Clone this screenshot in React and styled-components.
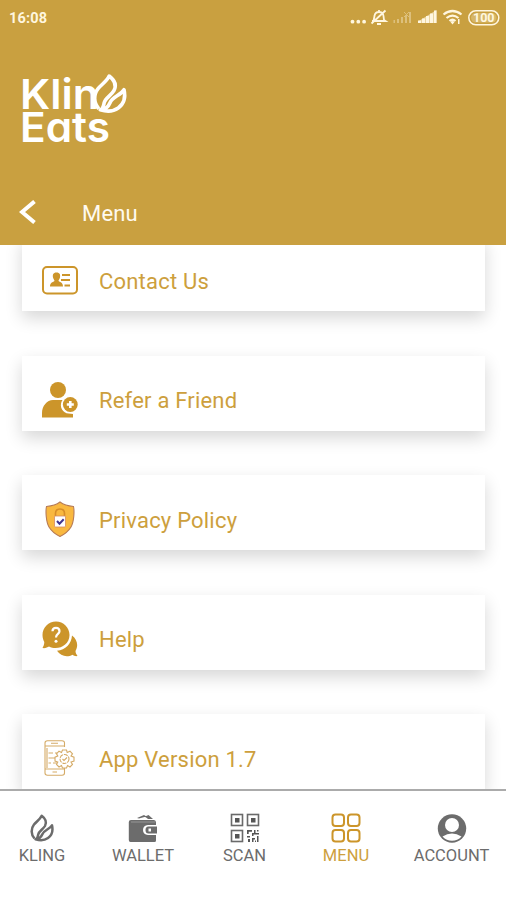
import React from 'react';
import styled, { createGlobalStyle } from 'styled-components';

const GlobalStyle = createGlobalStyle`
    :root {
        --gold: #c9a040;
        --text-gold: #cd9f3d;
        --nav-grey: #6c6c6c;
        --cream: #fff6df;
    }
    * {
        box-sizing: border-box;
    }
    body {
        margin: 0;
        background: #fff;
        font-family: Roboto, "Liberation Sans", sans-serif;
    }
`;

// Two leaf flame, used by the logo and by the first tab
const Flame = ({ color, inside = 'none' }) => (
    <g stroke={color} strokeWidth="2.500" strokeLinejoin="round" fill={inside}>
        <path d="M7.500 25.500C3.800 21.500 3.800 15.500 7 11.500C9.500 8.500 13 6.500 14.700 2.800C19 6 19.800 9.500 18 13C16 16.500 12 18 11.200 21.500C10.900 23 10.700 24.500 9.500 26" />
        <path d="M25 12.300C26.300 18 24.500 22.500 21 25C17.500 27.500 12.500 27.500 8.500 26.200C12 26 14 24.500 15.200 21.500C17 17 22.500 16.500 25 12.300Z" />
    </g>
);

const Logo = () => (
    <LogoSvg viewBox="0 0 112 84">
        <text x="0" y="39" textLength="79" lengthAdjust="spacingAndGlyphs">Klin</text>
        <text x="0" y="72" textLength="90" lengthAdjust="spacingAndGlyphs">Eats</text>
        <g transform="translate(68 2) scale(1.44)">
            <Flame color="#fff" inside="#c9a040" />
        </g>
    </LogoSvg>
);

const StatusIcons = () => (
    <svg width="152" height="20" viewBox="348 8 152 20" fill="#fff6df">
        <circle cx="352.500" cy="21.700" r="1.900" />
        <circle cx="358.300" cy="21.700" r="1.900" />
        <circle cx="364.100" cy="21.700" r="1.900" />
        <g fill="none" stroke="#fff6df" strokeWidth="1.800">
            <path d="M373.500 21L374.500 16Q375 12 379 12Q383 12 383.500 16L384 20L385.500 21H372M377 24H381M385.500 10.500L371.500 23.500M379 12V10" />
        </g>
        <g opacity=".38">
            <path d="M393.500 20H395V23H393.500ZM397 19H399V23H397ZM401 17H403V23H401ZM405 15H407V23H405ZM409 12H411V23H409Z" />
            <path d="M404 12L409 17M409 12L404 17" stroke="#fff6df" />
        </g>
        <path d="M418 20.500H421V23H418ZM422 18.500H425V23H422ZM426 16H429V23H426ZM430 13.500H433V23H430ZM434 10.500H436.500V23H434Z" />
        <path d="M418 21.500L436.500 10V23H418Z" opacity=".6" />
        <g fill="none" stroke="#fff6df" strokeWidth="2.200">
            <path d="M443.500 14.500Q452.500 7.500 461.500 14.500M446.500 18Q452.500 13.200 458.500 18M449.500 21Q452.500 18.500 455.500 21" />
        </g>
        <path d="M450.500 22Q452.500 20 454.500 22L452.500 24.500ZM458 19H459.500V24H458Z" />
        <rect x="468.800" y="10.800" width="30" height="14" rx="7" fill="none" stroke="#fff6df" strokeWidth="1.500" />
        <rect x="471" y="13" width="25.600" height="9.600" rx="4.800" opacity=".25" />
        <text x="483.800" y="22.300" textAnchor="middle" fontSize="12.500" fontWeight="700">100</text>
    </svg>
);

const ContactIcon = () => (
    <svg width="36" height="36" viewBox="0 0 36 36" fill="#cc952a">
        <rect x="1" y="5" width="34" height="26.500" rx="4" fill="none" stroke="#cc952a" strokeWidth="2" />
        <path d="M14.500 10.500C18 10.500 18.500 13 18 15.500C17.700 17 16.500 18 16.500 19C18.500 20.500 21 20.500 21 24.500H8C8 20.500 10.500 20.500 12.500 19C12.500 18 11.300 17 11 15.500C10.500 13 11 10.500 14.500 10.500Z" />
        <path d="M20 13H28M19 18H28M22.500 23.500H28" stroke="#cc952a" strokeWidth="1.900" />
    </svg>
);

const ReferIcon = () => (
    <svg width="36" height="36" viewBox="0 0 36 36" fill="#cc952a">
        <circle cx="16" cy="8" r="8" />
        <path d="M0 35.500V31C0 24 5 18 11 18H20.500A8.800 8.800 0 0 0 24.500 31.300L31 32V35.500Z" />
        <circle cx="28.300" cy="22.500" r="7.400" />
        <path d="M28.300 19V26M24.800 22.500H31.800" stroke="#fff" strokeWidth="2.600" />
    </svg>
);

const PrivacyIcon = () => (
    <svg width="36" height="36" viewBox="0 0 36 36">
        <path d="M18 1C22 4 26 5 31.500 5.500C32.500 10 32 21 29 26C26 31 22 33.500 18 35.500C14 33.500 10 31 7 26C4 21 3.500 10 4.500 5.500C10 5 14 4 18 1Z" fill="#f9b83f" stroke="#b77b55" strokeWidth="1.100" />
        <path d="M13.500 16V12.500Q13.500 8 18 8Q22.500 8 22.500 12.500V16" fill="none" stroke="#d78d28" strokeWidth="1.600" />
        <rect x="12.500" y="15" width="11" height="11" rx="1" fill="#fff" stroke="#d58c62" strokeWidth=".8" />
        <path d="M15 20L17.500 22.700L21.700 18.300" fill="none" stroke="#40358f" strokeWidth="2" />
    </svg>
);

const HelpIcon = () => (
    <svg width="36" height="36" viewBox="0 0 36 36" fill="#cc952a">
        <path d="M30 14.500C35.500 18.500 36.500 25 33.500 30C33.500 32 34.500 33.500 35.500 35C33.500 35.500 31.500 34.500 30.500 33.700C25 36.800 18.500 35 15 29.800C23.500 29 29.500 23 30 14.500Z" />
        <path d="M14 .5C6.500 .5 .5 6.500 .5 14C.5 17 1.500 19.500 2.300 21C2.300 23.500 1.300 25.500 .5 27C3 27.500 5.500 26.500 7 25.500C15.500 30 27.500 24.500 27.500 14C27.500 6.500 21.500 .5 14 .5Z" />
        <path d="M10.500 10.300C10.500 5.700 17.500 5.700 17.500 10.300C17.500 13 14 13 14 16.500" fill="none" stroke="#fff" strokeWidth="2.200" />
        <circle cx="14" cy="20.300" r="1.500" fill="#fff" />
    </svg>
);

const VersionIcon = () => (
    <svg width="36" height="36" viewBox="0 0 36 36" fill="none" stroke="#d5ab67" strokeWidth="1.100">
        <path d="M22.500 7V3Q22.500 .8 20 .8H5.500Q3 .8 3 3V33Q3 35.200 5.500 35.200H20Q22.500 35.200 22.500 33V28M3 6H22.500M3 29H22.500M9 3.300H16M10.500 32H15M5 28V8" />
        <path d="M6.500 13H11M13 13H15M6.500 18H13M6.500 23H9M11 23H15" />
        <path d="M20.500 10H24.500L25.200 12.500L28 11.200L30.500 13.800L29 16L32 17.200V21L29 22L30.500 24.500L28 27L25.500 25.500L24.500 28H20.500L19.500 25.500L17 27L14.500 24.500L15.800 22L13 21V17.200L15.800 16L14.500 13.800L17 11.200L19.500 12.500Z" />
        <circle cx="22.500" cy="19" r="4.500" strokeDasharray="4 1" />
        <path d="M20.500 19L22 20.500L25 17.500" />
    </svg>
);

const KlingIcon = () => (
    <svg width="30" height="30" viewBox="0 0 30 30">
        <Flame color="#6c6c6c" />
    </svg>
);

const WalletIcon = () => (
    <svg width="30" height="30" viewBox="0 0 30 30" fill="#6c6c6c">
        <path d="M9 5L16 2L20 4.500L16.500 4L11 5.500Z" />
        <path d="M17 3.500L20.500 2L25 6H20Z" />
        <path d="M3 7H26Q28 7 28 9.500V12H20Q15 12.500 15 17Q15 21.500 20 22H28V27.500Q28 29 26.500 29H2.500Q.8 29 .8 27V9Q.8 7 3 7Z" />
        <path d="M20.500 13.500H29V20.500H20.500Q17.500 20.500 17.500 17Q17.500 13.500 20.500 13.500ZM20.500 15.500V18.500H23V15.500Z" fillRule="evenodd" />
        <path d="M3 9H27" stroke="#aaa" strokeWidth=".7" />
    </svg>
);

const ScanIcon = () => (
    <svg width="30" height="30" viewBox="0 0 30 30" fill="#555">
        <g fill="none" stroke="#6a6a6a" strokeWidth="1.600">
            <rect x="1.500" y="1.500" width="11" height="11" />
            <rect x="17.500" y="1.500" width="11" height="11" />
            <rect x="1.500" y="17.500" width="11" height="11" />
        </g>
        <path d="M5 5H9.500V9.500H5ZM21 5H25.500V9.500H21ZM5 21H9.500V25.500H5Z" />
        <path d="M17 17H22V18.700H18.700V21H17ZM24 17H25.500V20H29V21.500H23.500V23H22V20H24ZM27 17H28.500V18.500H27ZM17 23H20V24.500H17ZM18 26H20V29H18ZM22 25H25V26.500H23.500V29H22ZM27 23H28.500V29H27ZM25 27.500H26V29H25Z" />
    </svg>
);

const MenuIcon = () => (
    <svg width="30" height="30" viewBox="0 0 30 30" fill="none" stroke="#cc952a" strokeWidth="2">
        <rect x="1.500" y="1.500" width="11.500" height="11.500" rx="3" />
        <rect x="17" y="1.500" width="11.500" height="11.500" rx="3" />
        <rect x="1.500" y="17" width="11.500" height="11.500" rx="3" />
        <rect x="17" y="17" width="11.500" height="11.500" rx="3" />
    </svg>
);

const AccountIcon = () => (
    <svg width="30" height="30" viewBox="0 0 30 30">
        <circle cx="15" cy="15.500" r="14.200" fill="#6c6c6c" />
        <circle cx="15" cy="12" r="7" fill="#fff" />
        <path d="M5.500 23.500Q15 17.500 24.500 23.500Q20.500 27.800 15 27.800Q9.500 27.800 5.500 23.500Z" fill="#fff" />
    </svg>
);

const items = [
    { label: 'Contact Us', icon: ContactIcon },
    { label: 'Refer a Friend', icon: ReferIcon },
    { label: 'Privacy Policy', icon: PrivacyIcon },
    { label: 'Help', icon: HelpIcon },
    { label: 'App Version 1.7', icon: VersionIcon },
];

const tabs = [
    { label: 'KLING', icon: KlingIcon },
    { label: 'WALLET', icon: WalletIcon },
    { label: 'SCAN', icon: ScanIcon },
    { label: 'MENU', icon: MenuIcon, active: true },
    { label: 'ACCOUNT', icon: AccountIcon },
];

const App = () => (
    <Screen>
        <GlobalStyle />
        <Header>
            <StatusBar>
                <Clock>16:08</Clock>
                <StatusIcons />
            </StatusBar>
            <Logo />
            <TitleBar>
                <BackButton aria-label="Back">
                    <svg width="17" height="24" viewBox="0 0 17 24" fill="none" stroke="#fff" strokeWidth="4">
                        <path d="M15.500 1.500L3 12L15.500 22.500" />
                    </svg>
                </BackButton>
                <Title>Menu</Title>
            </TitleBar>
        </Header>
        <MenuList>
            {items.map(({ label, icon: Icon }) => (
                <MenuCard key={label}>
                    <Icon />
                    <CardLabel>{label}</CardLabel>
                </MenuCard>
            ))}
        </MenuList>
        <TabBar>
            {tabs.map(({ label, icon: Icon, active }) => (
                <Tab key={label} $active={active}>
                    <Icon />
                    <span>{label}</span>
                </Tab>
            ))}
        </TabBar>
    </Screen>
);

export default App;

// Screen
const Screen = styled.div`
    display: flex;
    flex-direction: column;
    width: 506px;
    height: 900px;
    overflow: hidden;
    background: #fff;
`;

// Header
const Header = styled.header`
    display: flex;
    flex-direction: column;
    flex: none;
    height: 245px;
    background: var(--gold);
`;

const StatusBar = styled.div`
    display: flex;
    align-items: center;
    justify-content: space-between;
    height: 36px;
    padding: 0 6px 0 9px;
`;

const Clock = styled.span`
    color: var(--cream);
    font-size: 14.5px;
    font-weight: 700;
    letter-spacing: 0.2px;
`;

const LogoSvg = styled.svg`
    width: 112px;
    height: 84px;
    margin: 34px 0 0 20px;
    overflow: visible;
    fill: #fff;

    text {
        font-family: Inter, sans-serif;
        font-size: 41px;
        font-weight: 600;
        font-feature-settings: "cv11";
    }
`;

const TitleBar = styled.div`
    display: flex;
    align-items: center;
    height: 64px;
    margin-top: 27px;
    padding: 0 0 2px 19px;
`;

const BackButton = styled.button`
    display: flex;
    width: 63px;
    padding: 0;
    border: 0;
    background: none;
`;

const Title = styled.h1`
    margin: 2px 0 0;
    color: #fffaf0;
    font-size: 22px;
    font-weight: 400;
    letter-spacing: 0.2px;
`;

// Menu
const MenuList = styled.main`
    display: flex;
    flex: none;
    flex-direction: column;
    justify-content: flex-end;
    gap: 44.5px;
    height: 544px;
    padding: 0 21px 0 22px;
    overflow: hidden;
`;

const MenuCard = styled.div`
    display: flex;
    flex: none;
    align-items: center;
    height: 75px;
    padding: 13px 0 0 20px;
    background: #fff;
    box-shadow: 0 7px 16px rgba(0, 0, 0, 0.16);
`;

const CardLabel = styled.span`
    margin: 2px 0 0 21px;
    color: var(--text-gold);
    font-size: 22px;
    letter-spacing: 0.2px;
    white-space: nowrap;
`;

// Tab bar
const TabBar = styled.nav`
    display: grid;
    flex: none;
    grid-template-columns: 84px 118px 85px 118px 93px;
    height: 111px;
    border-top: 2px solid #ababab;
    background: #fff;
`;

const Tab = styled.div`
    display: flex;
    flex-direction: column;
    align-items: center;
    padding-top: 22px;
    color: ${props => (props.$active ? 'var(--text-gold)' : 'var(--nav-grey)')};
    font-size: 16.5px;
    line-height: 20px;

    span {
        margin-top: 3px;
    }
`;
